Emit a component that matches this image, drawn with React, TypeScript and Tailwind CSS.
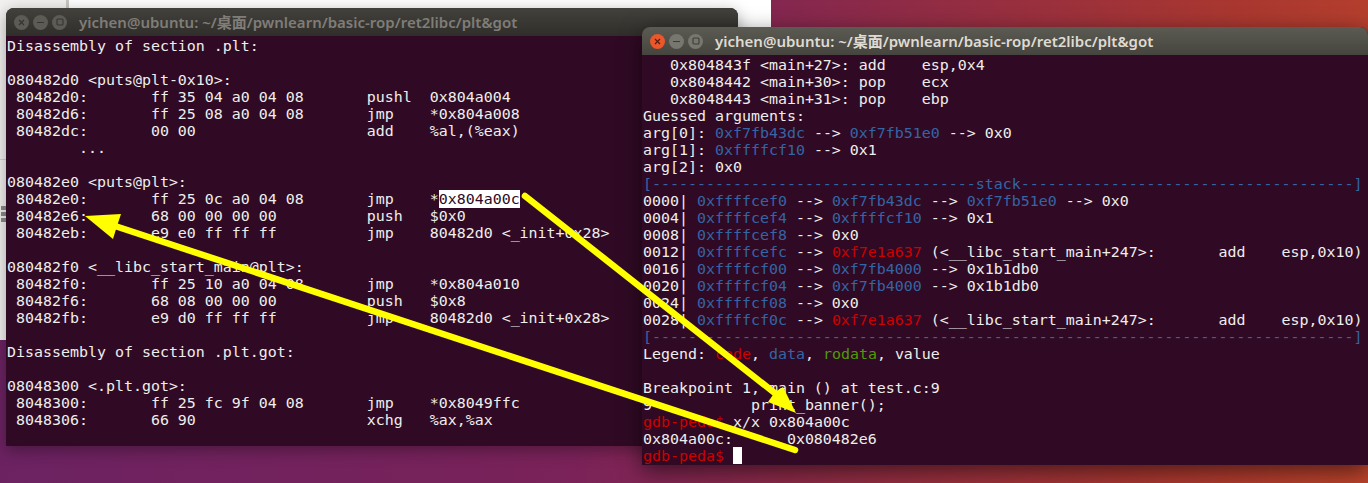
import React from 'react';

const blue = (s: string) => <span className="text-[#3465a4]">{s}</span>;
const red = (s: string) => <span className="text-[#cc0000]">{s}</span>;
const green = (s: string) => <span className="text-[#4e9a06]">{s}</span>;

const asm = (addr: string, hex: string, op: string, arg: React.ReactNode) => (
  <>
    {` ${addr}:`.padEnd(16)}
    {hex.padEnd(24)}
    {op.padEnd(7)}
    {arg}
  </>
);

const leftRows: React.ReactNode[] = [
  'Disassembly of section .plt:',
  '',
  '080482d0 <puts@plt-0x10>:',
  asm('80482d0', 'ff 35 04 a0 04 08', 'pushl', '0x804a004'),
  asm('80482d6', 'ff 25 08 a0 04 08', 'jmp', '*0x804a008'),
  asm('80482dc', '00 00', 'add', '%al,(%eax)'),
  '        ...',
  '',
  '080482e0 <puts@plt>:',
  asm(
    '80482e0',
    'ff 25 0c a0 04 08',
    'jmp',
    <>
      *<span className="bg-white text-[#300a24]">0x804a00c</span>
    </>,
  ),
  asm('80482e6', '68 00 00 00 00', 'push', '$0x0'),
  asm('80482eb', 'e9 e0 ff ff ff', 'jmp', '80482d0 <_init+0x28>'),
  '',
  '080482f0 <__libc_start_main@plt>:',
  asm('80482f0', 'ff 25 10 a0 04 08', 'jmp', '*0x804a010'),
  asm('80482f6', '68 08 00 00 00', 'push', '$0x8'),
  asm('80482fb', 'e9 d0 ff ff ff', 'jmp', '80482d0 <_init+0x28>'),
  '',
  'Disassembly of section .plt.got:',
  '',
  '08048300 <.plt.got>:',
  asm('8048300', 'ff 25 fc 9f 04 08', 'jmp', '*0x8049ffc'),
  asm('8048306', '66 90', 'xchg', '%ax,%ax'),
];

const libcCall = '(<__libc_start_main+247>:       add    esp,0x10)';

const rightRows: React.ReactNode[] = [
  '   0x804843f <main+27>: add    esp,0x4',
  '   0x8048442 <main+30>: pop    ecx',
  '   0x8048443 <main+31>: pop    ebp',
  'Guessed arguments:',
  <>arg[0]: {blue('0xf7fb43dc')} --&gt; {blue('0xf7fb51e0')} --&gt; 0x0</>,
  <>arg[1]: {blue('0xffffcf10')} --&gt; 0x1</>,
  'arg[2]: 0x0',
  blue(`[${'-'.repeat(36)}stack${'-'.repeat(37)}]`),
  <>0000| {blue('0xffffcef0')} --&gt; {blue('0xf7fb43dc')} --&gt; {blue('0xf7fb51e0')} --&gt; 0x0</>,
  <>0004| {blue('0xffffcef4')} --&gt; {blue('0xffffcf10')} --&gt; 0x1</>,
  <>0008| {blue('0xffffcef8')} --&gt; 0x0</>,
  <>0012| {blue('0xffffcefc')} --&gt; {red('0xf7e1a637')} {libcCall}</>,
  <>0016| {blue('0xffffcf00')} --&gt; {blue('0xf7fb4000')} --&gt; 0x1b1db0</>,
  <>0020| {blue('0xffffcf04')} --&gt; {blue('0xf7fb4000')} --&gt; 0x1b1db0</>,
  <>0024| {blue('0xffffcf08')} --&gt; 0x0</>,
  <>0028| {blue('0xffffcf0c')} --&gt; {red('0xf7e1a637')} {libcCall}</>,
  blue(`[${'-'.repeat(78)}]`),
  <>Legend: {red('code')}, {blue('data')}, {green('rodata')}, value</>,
  '',
  'Breakpoint 1, main () at test.c:9',
  '9           print_banner();',
  <>{red('gdb-peda$')} x/x 0x804a00c</>,
  '0x804a00c:      0x080482e6',
  <>
    {red('gdb-peda$')} <span className="-mt-px inline-block h-[17px] w-[9px] bg-white align-top" />
  </>,
];

const title = 'yichen@ubuntu: ~/桌面/pwnlearn/basic-rop/ret2libc/plt&got';

function WindowButtons({ active }: { active: boolean }) {
  const stroke = active ? '#3c3b37' : '#35342f';
  const idle = active ? 'bg-[#77766f]' : 'bg-[#5c5b55]';
  return (
    <div className="flex items-center gap-1">
      <span className={`flex h-[15px] w-[15px] items-center justify-center rounded-full ${active ? 'bg-[#e9572b]' : idle}`}>
        <svg width="7" height="7" viewBox="0 0 7 7" stroke={active ? '#5a1c08' : stroke} strokeWidth="1.2">
          <path d="M1 1l5 5M6 1L1 6" />
        </svg>
      </span>
      <span className={`flex h-[15px] w-[15px] items-center justify-center rounded-full ${idle}`}>
        <svg width="9" height="7" viewBox="0 0 9 7" stroke={stroke} strokeWidth="1.2">
          <path d="M1 3.5h7" />
        </svg>
      </span>
      <span className={`flex h-[15px] w-[15px] items-center justify-center rounded-full ${idle}`}>
        <svg width="8" height="8" viewBox="0 0 8 8" fill="none" stroke={stroke} strokeWidth="1.1">
          <rect x="1" y="1" width="6" height="6" rx="1" />
        </svg>
      </span>
    </div>
  );
}

function Terminal({ active, rows, className }: { active: boolean; rows: React.ReactNode[]; className: string }) {
  return (
    <div className={`absolute flex flex-col overflow-hidden rounded-t-lg bg-[#300a24] ${className}`}>
      <div
        className={`flex h-7 shrink-0 items-center gap-3 pl-2 ${
          active ? 'bg-gradient-to-b from-[#5c5b53] to-[#45443e]' : 'bg-gradient-to-b from-[#42413c] to-[#2f2e2a]'
        }`}
      >
        <WindowButtons active={active} />
        <span
          className={`whitespace-nowrap font-['Noto_Sans','Noto_Sans_CJK_SC',sans-serif] text-[15px] font-semibold ${
            active ? 'text-[#dfdbd2]' : 'text-[#807d78]'
          }`}
        >
          {title}
        </span>
      </div>
      <div className="pl-px pt-[2px] font-['DejaVu_Sans_Mono',monospace] text-[14.95px] leading-[17px] text-[#eeeeec]">
        {rows.map((row, i) => (
          <div key={i} className="h-[17px] whitespace-pre">
            {row}
          </div>
        ))}
      </div>
    </div>
  );
}

export default function App() {
  return (
    <div className="relative h-[483px] w-[1368px] overflow-hidden bg-[linear-gradient(100deg,#6a2263_0%,#7a2259_45%,#8c2a48_60%,#a93730_85%,#bb432c_100%)]">
      {/* browser window sitting behind the terminals, only its left rail and top edge show */}
      <div className="absolute left-0 top-0 flex h-[340px] w-[771px] bg-white">
        <div className="flex h-full w-[69px] flex-col border-r-[3px] border-[#c9c7c4] bg-[#f2f1f0]">
          <div className="h-40 shrink-0 border-b border-[#d5d3cf]" />
          <svg className="ml-px mt-[46px]" width="5" height="16" viewBox="0 0 5 16" fill="#8a8a8a">
            <rect x="0" y="0" width="5" height="4" />
            <rect x="0" y="6" width="5" height="4" />
            <rect x="0" y="12" width="5" height="4" />
          </svg>
        </div>
      </div>

      <Terminal active={false} rows={leftRows} className="left-[6px] top-2 h-[438px] w-[732px] shadow-[0_4px_16px_rgba(0,0,0,0.35)]" />
      <Terminal active rows={rightRows} className="left-[642px] top-[27px] h-[438px] w-[726px] shadow-[0_6px_22px_rgba(0,0,0,0.55)]" />

      {/* yellow annotation arrows drawn over both windows */}
      <svg className="absolute inset-0" width="1368" height="483" viewBox="0 0 1368 483">
        <g stroke="#ffff00" strokeWidth="6.5" strokeLinecap="round" fill="#ffff00">
          <path d="M525 196L776 394" fill="none" />
          <path d="M795 450L115 226" fill="none" />
        </g>
        <polygon points="796,413 768,402 775,392 783,387" fill="#ffff00" />
        <polygon points="85,216 121,214 117,226 113,239" fill="#ffff00" />
      </svg>
    </div>
  );
}
